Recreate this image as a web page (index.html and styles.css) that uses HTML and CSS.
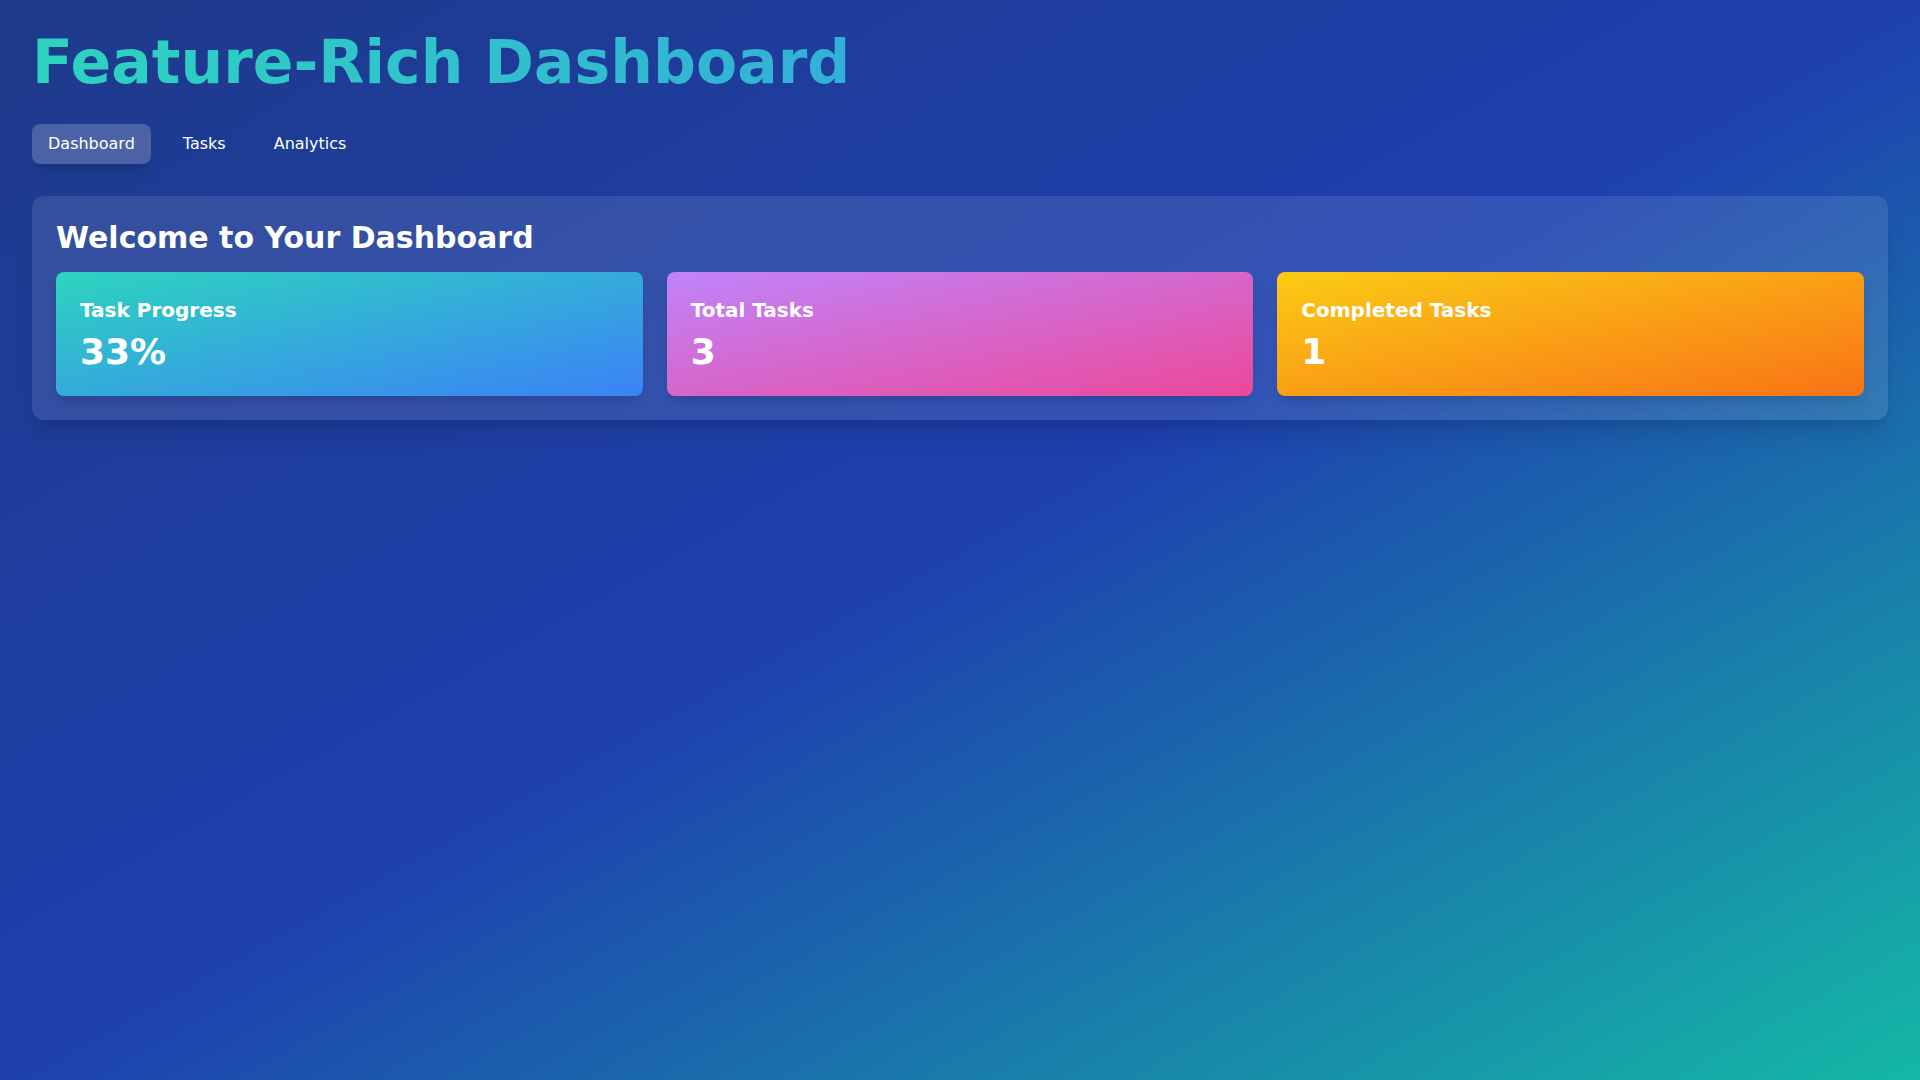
FILE: index.html
```html
<!DOCTYPE html>
<html lang="en">
<head>
<meta charset="utf-8">
<title>Feature-Rich Dashboard</title>
<link rel="stylesheet" href="styles.css">
</head>
<body>
<div class="page">
  <h1 class="title">Feature-Rich Dashboard</h1>
  <nav class="nav">
    <button class="nav-btn active">Dashboard</button>
    <button class="nav-btn">Tasks</button>
    <button class="nav-btn">Analytics</button>
  </nav>
  <section class="panel">
    <h2 class="panel-title">Welcome to Your Dashboard</h2>
    <div class="cards">
      <div class="card card-teal">
        <h3 class="card-label">Task Progress</h3>
        <p class="card-value">33%</p>
      </div>
      <div class="card card-pink">
        <h3 class="card-label">Total Tasks</h3>
        <p class="card-value">3</p>
      </div>
      <div class="card card-orange">
        <h3 class="card-label">Completed Tasks</h3>
        <p class="card-value">1</p>
      </div>
    </div>
  </section>
</div>
</body>
</html>
```
FILE: styles.css
```css
* { box-sizing: border-box; }
html, body { margin: 0; padding: 0; }
body {
  font-family: "DejaVu Sans", sans-serif;
  color: #fff;
  min-height: 100vh;
  background: linear-gradient(to bottom right, #1e3a8a, #1e40af, #14b8a6);
}
.page {
  padding: 32px;
  min-height: 100vh;
}
.title {
  margin: 0 0 32px 0;
  font-size: 60px;
  line-height: 60px;
  font-weight: 700;
  background: linear-gradient(to right, #2dd4bf, #3b82f6);
  -webkit-background-clip: text;
  background-clip: text;
  color: transparent;
}
.nav {
  display: flex;
  gap: 16px;
  margin-bottom: 32px;
}
.nav-btn {
  font-family: "DejaVu Sans", sans-serif;
  font-size: 16px;
  line-height: 24px;
  padding: 8px 16px;
  border: none;
  border-radius: 8px;
  background: transparent;
  color: #fff;
  cursor: pointer;
}
.nav-btn.active {
  background: rgba(255, 255, 255, 0.2);
  box-shadow: 0 10px 15px -3px rgba(0,0,0,0.1), 0 4px 6px -4px rgba(0,0,0,0.1);
}
.panel {
  background: rgba(255, 255, 255, 0.1);
  border-radius: 12px;
  padding: 24px;
  box-shadow: 0 20px 25px -5px rgba(0,0,0,0.1), 0 8px 10px -6px rgba(0,0,0,0.1);
}
.panel-title {
  margin: 0 0 16px 0;
  font-size: 30px;
  line-height: 36px;
  font-weight: 700;
}
.cards {
  display: grid;
  grid-template-columns: repeat(3, 1fr);
  gap: 24px;
}
.card {
  border-radius: 8px;
  padding: 24px;
  box-shadow: 0 10px 15px -3px rgba(0,0,0,0.1), 0 4px 6px -4px rgba(0,0,0,0.1);
}
.card-teal { background: linear-gradient(to bottom right, #2dd4bf, #3b82f6); }
.card-pink { background: linear-gradient(to bottom right, #c084fc, #ec4899); }
.card-orange { background: linear-gradient(to bottom right, #facc15, #f97316); }
.card-label {
  margin: 0 0 8px 0;
  font-size: 20px;
  line-height: 28px;
  font-weight: 700;
}
.card-value {
  margin: 0;
  font-size: 36px;
  line-height: 40px;
  font-weight: 700;
}
```
